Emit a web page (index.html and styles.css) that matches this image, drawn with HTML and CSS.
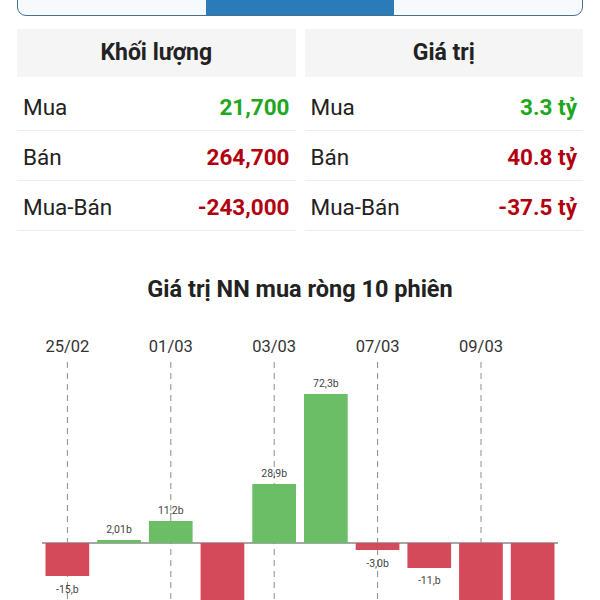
FILE: index.html
```html
<!DOCTYPE html>
<html lang="vi">
<head>
    <meta charset="UTF-8">
    <meta name="viewport" content="width=device-width, initial-scale=1.0">
    <title>Giao dịch nước ngoài</title>
    <link rel="stylesheet" href="styles.css">
</head>
<body>

<!-- Tabs -->
<nav class="tabs">
    <div class="tab">Khớp lệnh</div>
    <div class="tab active">Nước ngoài</div>
    <div class="tab">Tổng hợp</div>
</nav>

<!-- Summary tables -->
<section class="stats">
    <div class="stat-table">
        <div class="stat-head">Khối lượng</div>
        <div class="stat-row"><span>Mua</span><span class="val up">21,700</span></div>
        <div class="stat-row"><span>Bán</span><span class="val down">264,700</span></div>
        <div class="stat-row"><span>Mua-Bán</span><span class="val down">-243,000</span></div>
    </div>
    <div class="stat-table">
        <div class="stat-head">Giá trị</div>
        <div class="stat-row"><span>Mua</span><span class="val up">3.3 tỷ</span></div>
        <div class="stat-row"><span>Bán</span><span class="val down">40.8 tỷ</span></div>
        <div class="stat-row"><span>Mua-Bán</span><span class="val down">-37.5 tỷ</span></div>
    </div>
</section>

<!-- Chart -->
<section class="chart">
    <h2 class="chart-title">Giá trị NN mua ròng 10 phiên</h2>
    <svg class="chart-svg" width="600" height="300" viewBox="0 0 600 300">
        <!-- dates -->
        <g class="dates">
            <text x="67.4" y="48">25/02</text>
            <text x="170.8" y="48">01/03</text>
            <text x="274.2" y="48">03/03</text>
            <text x="377.6" y="48">07/03</text>
            <text x="481" y="48">09/03</text>
        </g>
        <!-- grid -->
        <g class="grid">
            <line x1="67.4" y1="58" x2="67.4" y2="300"/>
            <line x1="170.8" y1="58" x2="170.8" y2="300"/>
            <line x1="274.2" y1="58" x2="274.2" y2="300"/>
            <line x1="377.6" y1="58" x2="377.6" y2="300"/>
            <line x1="481" y1="58" x2="481" y2="300"/>
        </g>
        <line class="axis" x1="42" y1="239" x2="558" y2="239"/>
        <!-- bars -->
        <g>
            <rect class="bar-down" x="45.5" y="239" width="43.7" height="33"/>
            <rect class="bar-up" x="97.2" y="236" width="43.7" height="3"/>
            <rect class="bar-up" x="148.9" y="217" width="43.7" height="22"/>
            <rect class="bar-down" x="200.6" y="239" width="43.7" height="100"/>
            <rect class="bar-up" x="252.3" y="180" width="43.7" height="59"/>
            <rect class="bar-up" x="304" y="90" width="43.7" height="149"/>
            <rect class="bar-down" x="355.7" y="239" width="43.7" height="7"/>
            <rect class="bar-down" x="407.4" y="239" width="43.7" height="25"/>
            <rect class="bar-down" x="459.1" y="239" width="43.7" height="100"/>
            <rect class="bar-down" x="510.8" y="239" width="43.7" height="100"/>
        </g>
        <!-- value labels -->
        <g class="labels">
            <text x="67.4" y="289">-15,b</text>
            <text x="119" y="229">2,01b</text>
            <text x="170.8" y="210">11,2b</text>
            <text x="274.2" y="173">28,9b</text>
            <text x="325.9" y="83">72,3b</text>
            <text x="377.6" y="263">-3,0b</text>
            <text x="429.3" y="280">-11,b</text>
        </g>
    </svg>
</section>

</body>
</html>
```

FILE: styles.css
```css
/* Base */
body {
    font-family: Roboto, "Noto Sans", sans-serif;
    background-color: #fff;
    margin: 0;
    padding: 0;
    color: #222;
    overflow: hidden;
}

/* Tabs */
.tabs {
    display: grid;
    grid-template-columns: repeat(3, 1fr);
    margin: -32px 17px 0;
    height: 48px;
    box-sizing: border-box;
    border: 1.5px solid #46708f;
    border-radius: 0 0 9px 9px;
    overflow: hidden;
    background-color: #f7fafc;
}

.tab {
    display: flex;
    align-items: center;
    justify-content: center;
    padding-bottom: 2px;
    font-size: 16px;
    color: #333;
}

.tab.active {
    background-color: #2a7bb8;
    color: #fff;
}

/* Summary tables */
.stats {
    display: grid;
    grid-template-columns: 1fr 1fr;
    gap: 9px;
    padding: 0 17px;
    margin-top: 13px;
}

.stat-head {
    height: 48px;
    line-height: 48px;
    margin-bottom: 4px;
    background-color: #f5f5f5;
    text-align: center;
    font-size: 23px;
    font-weight: bold;
    color: #222;
}

.stat-row {
    display: flex;
    justify-content: space-between;
    height: 50px;
    box-sizing: border-box;
    padding: 3px 6px 0;
    line-height: 46px;
    border-bottom: 1px solid #eeeeee;
    font-size: 22.5px;
}

.val {
    font-weight: bold;
}

.up {
    color: #20a620;
}

.down {
    color: #b3000f;
}

/* Chart */
.chart-title {
    margin: 43px 0 0;
    height: 30px;
    line-height: 30px;
    text-align: center;
    font-size: 23.5px;
    font-weight: bold;
    color: #222;
}

.chart-svg {
    display: block;
}

.dates text {
    font-size: 16.5px;
    fill: #333;
    text-anchor: middle;
}

.grid line {
    stroke: #8c8c8c;
    stroke-width: 1;
    stroke-dasharray: 6 5;
}

.axis {
    stroke: #888;
    stroke-width: 1.5;
}

.bar-up {
    fill: #6bbd66;
}

.bar-down {
    fill: #d44a5a;
}

.labels text {
    font-size: 10.5px;
    fill: #444;
    text-anchor: middle;
}
```
